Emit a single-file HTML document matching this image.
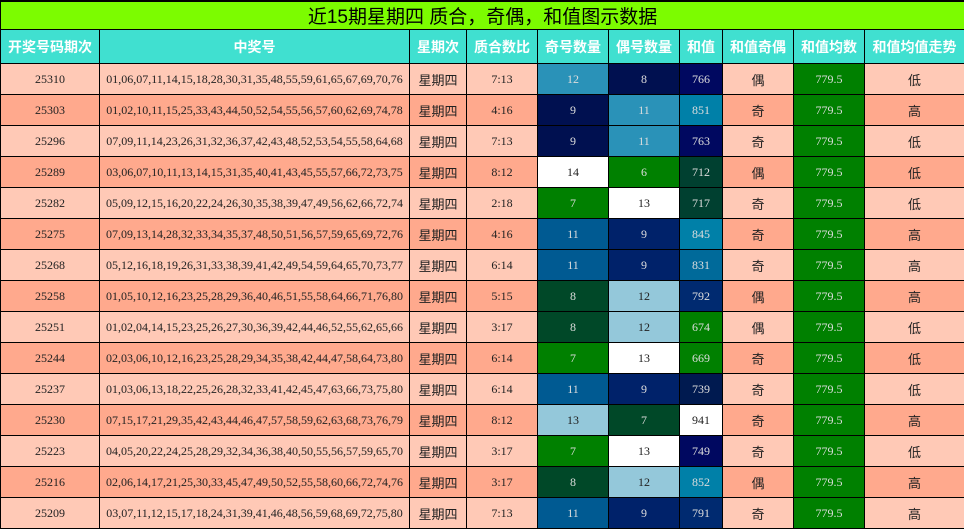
<!DOCTYPE html>
<html><head><meta charset="utf-8"><style>
body{margin:0;width:964px;height:530px;overflow:hidden;background:#fff}
table{border-collapse:collapse;table-layout:fixed;width:964px;font-family:"Liberation Serif","Noto Serif CJK SC",serif;font-size:12px}
td,th{border:1px solid #000;text-align:center;padding:0;overflow:hidden;white-space:nowrap}
.t td{background:#7cfc00;height:27px;font-family:"Liberation Sans","Noto Sans CJK SC",sans-serif;font-size:19px;color:#000;border-width:2px 1px 1px 1px}
th{background:#40e0d0;color:#fff;height:33px;font-family:"Liberation Sans","Noto Sans CJK SC",sans-serif;font-size:14px;font-weight:bold}
tr.r td{height:30px;color:#222}
tr.a td{background:#ffc9b6}
tr.b td{background:#ffa98d}
.cn{font-family:"Liberation Sans","Noto Sans CJK SC",sans-serif;font-size:13px}
tr.r td.d{color:#ddd}
</style></head><body>
<table>
<colgroup><col style="width:99px"><col style="width:310px"><col style="width:57px"><col style="width:71px"><col style="width:71px"><col style="width:71px"><col style="width:43px"><col style="width:71px"><col style="width:71px"><col style="width:100px"></colgroup>
<tr class="t"><td colspan="10">近15期星期四 质合，奇偶，和值图示数据</td></tr>
<tr><th>开奖号码期次</th><th>中奖号</th><th>星期次</th><th>质合数比</th><th>奇号数量</th><th>偶号数量</th><th>和值</th><th>和值奇偶</th><th>和值均数</th><th>和值均值走势</th></tr>
<tr class="r a"><td>25310</td><td>01,06,07,11,14,15,18,28,30,31,35,48,55,59,61,65,67,69,70,76</td><td class="cn">星期四</td><td>7:13</td><td class="d" style="background:#2a92b8">12</td><td class="d" style="background:#001050">8</td><td class="d" style="background:#000860">766</td><td class="cn">偶</td><td class="d" style="background:#008000">779.5</td><td class="cn">低</td></tr>
<tr class="r b"><td>25303</td><td>01,02,10,11,15,25,33,43,44,50,52,54,55,56,57,60,62,69,74,78</td><td class="cn">星期四</td><td>4:16</td><td class="d" style="background:#001050">9</td><td class="d" style="background:#2a92b8">11</td><td class="d" style="background:#0080a8">851</td><td class="cn">奇</td><td class="d" style="background:#008000">779.5</td><td class="cn">高</td></tr>
<tr class="r a"><td>25296</td><td>07,09,11,14,23,26,31,32,36,37,42,43,48,52,53,54,55,58,64,68</td><td class="cn">星期四</td><td>7:13</td><td class="d" style="background:#001050">9</td><td class="d" style="background:#2a92b8">11</td><td class="d" style="background:#000860">763</td><td class="cn">奇</td><td class="d" style="background:#008000">779.5</td><td class="cn">低</td></tr>
<tr class="r b"><td>25289</td><td>03,06,07,10,11,13,14,15,31,35,40,41,43,45,55,57,66,72,73,75</td><td class="cn">星期四</td><td>8:12</td><td style="background:#fff">14</td><td class="d" style="background:#008000">6</td><td class="d" style="background:#004030">712</td><td class="cn">偶</td><td class="d" style="background:#008000">779.5</td><td class="cn">低</td></tr>
<tr class="r a"><td>25282</td><td>05,09,12,15,16,20,22,24,26,30,35,38,39,47,49,56,62,66,72,74</td><td class="cn">星期四</td><td>2:18</td><td class="d" style="background:#008000">7</td><td style="background:#fff">13</td><td class="d" style="background:#004030">717</td><td class="cn">奇</td><td class="d" style="background:#008000">779.5</td><td class="cn">低</td></tr>
<tr class="r b"><td>25275</td><td>07,09,13,14,28,32,33,34,35,37,48,50,51,56,57,59,65,69,72,76</td><td class="cn">星期四</td><td>4:16</td><td class="d" style="background:#005a92">11</td><td class="d" style="background:#00226a">9</td><td class="d" style="background:#0080a8">845</td><td class="cn">奇</td><td class="d" style="background:#008000">779.5</td><td class="cn">高</td></tr>
<tr class="r a"><td>25268</td><td>05,12,16,18,19,26,31,33,38,39,41,42,49,54,59,64,65,70,73,77</td><td class="cn">星期四</td><td>6:14</td><td class="d" style="background:#005a92">11</td><td class="d" style="background:#00226a">9</td><td class="d" style="background:#006a9a">831</td><td class="cn">奇</td><td class="d" style="background:#008000">779.5</td><td class="cn">高</td></tr>
<tr class="r b"><td>25258</td><td>01,05,10,12,16,23,25,28,29,36,40,46,51,55,58,64,66,71,76,80</td><td class="cn">星期四</td><td>5:15</td><td class="d" style="background:#004828">8</td><td style="background:#94c8da">12</td><td class="d" style="background:#002a70">792</td><td class="cn">偶</td><td class="d" style="background:#008000">779.5</td><td class="cn">高</td></tr>
<tr class="r a"><td>25251</td><td>01,02,04,14,15,23,25,26,27,30,36,39,42,44,46,52,55,62,65,66</td><td class="cn">星期四</td><td>3:17</td><td class="d" style="background:#004828">8</td><td style="background:#94c8da">12</td><td class="d" style="background:#008000">674</td><td class="cn">偶</td><td class="d" style="background:#008000">779.5</td><td class="cn">低</td></tr>
<tr class="r b"><td>25244</td><td>02,03,06,10,12,16,23,25,28,29,34,35,38,42,44,47,58,64,73,80</td><td class="cn">星期四</td><td>6:14</td><td class="d" style="background:#008000">7</td><td style="background:#fff">13</td><td class="d" style="background:#008000">669</td><td class="cn">奇</td><td class="d" style="background:#008000">779.5</td><td class="cn">低</td></tr>
<tr class="r a"><td>25237</td><td>01,03,06,13,18,22,25,26,28,32,33,41,42,45,47,63,66,73,75,80</td><td class="cn">星期四</td><td>6:14</td><td class="d" style="background:#005a92">11</td><td class="d" style="background:#00226a">9</td><td class="d" style="background:#001a50">739</td><td class="cn">奇</td><td class="d" style="background:#008000">779.5</td><td class="cn">低</td></tr>
<tr class="r b"><td>25230</td><td>07,15,17,21,29,35,42,43,44,46,47,57,58,59,62,63,68,73,76,79</td><td class="cn">星期四</td><td>8:12</td><td style="background:#94c8da">13</td><td class="d" style="background:#004828">7</td><td style="background:#fff">941</td><td class="cn">奇</td><td class="d" style="background:#008000">779.5</td><td class="cn">高</td></tr>
<tr class="r a"><td>25223</td><td>04,05,20,22,24,25,28,29,32,34,36,38,40,50,55,56,57,59,65,70</td><td class="cn">星期四</td><td>3:17</td><td class="d" style="background:#008000">7</td><td style="background:#fff">13</td><td class="d" style="background:#000860">749</td><td class="cn">奇</td><td class="d" style="background:#008000">779.5</td><td class="cn">低</td></tr>
<tr class="r b"><td>25216</td><td>02,06,14,17,21,25,30,33,45,47,49,50,52,55,58,60,66,72,74,76</td><td class="cn">星期四</td><td>3:17</td><td class="d" style="background:#004828">8</td><td style="background:#94c8da">12</td><td class="d" style="background:#0080a8">852</td><td class="cn">偶</td><td class="d" style="background:#008000">779.5</td><td class="cn">高</td></tr>
<tr class="r a"><td>25209</td><td>03,07,11,12,15,17,18,24,31,39,41,46,48,56,59,68,69,72,75,80</td><td class="cn">星期四</td><td>7:13</td><td class="d" style="background:#005a92">11</td><td class="d" style="background:#00226a">9</td><td class="d" style="background:#002a70">791</td><td class="cn">奇</td><td class="d" style="background:#008000">779.5</td><td class="cn">高</td></tr>
</table>
</body></html>
